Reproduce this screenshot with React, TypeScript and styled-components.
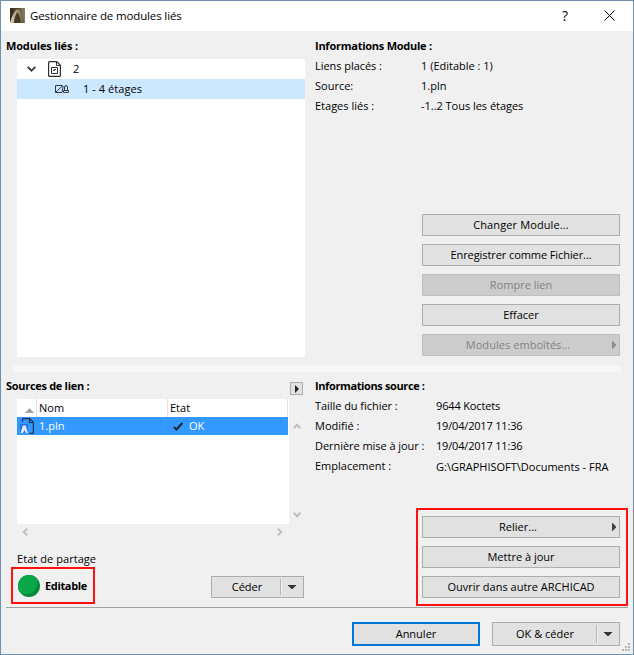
import React from 'react';
import styled, { createGlobalStyle, css } from 'styled-components';

const Global = createGlobalStyle`
  *{box-sizing:border-box}
  body{margin:0;background:#f0f0f0;overflow:hidden}
  svg{display:block;flex:none}
`;

const Window = styled.div`
  width:634px;height:655px;border:1px solid #6f8fab;background:#f0f0f0;
  display:flex;flex-direction:column;position:relative;
  font:11px/20px "Open Sans","Noto Sans",sans-serif;color:#000;
`;
const T = styled.span<{ $ls?: number; $b?: boolean; $dy?: number }>`
  white-space:pre;letter-spacing:${p => p.$ls ?? 0}px;font-weight:${p => (p.$b ? 700 : 400)};
  padding-top:${p => p.$dy ?? 0}px;
`;
const TitleBar = styled.header`
  height:30px;background:#fff;display:flex;align-items:center;padding:0 18px 1px 9px;font-size:11.5px;
`;
const Title = styled.div`flex:1;margin-left:5px;`;
const HelpMark = styled.div`width:8px;margin-right:34px;font-size:14px;font-weight:500;`;

const Upper = styled.section`height:335px;display:flex;padding-top:5px;`;
const Lower = styled.section`height:235px;display:flex;padding-top:4px;`;
const Left = styled.div`width:314px;padding-left:5px;`;
const Right = styled.div`flex:1;display:flex;flex-direction:column;`;
const Heading = styled.h2`
  margin:0;height:20px;font-size:11px;line-height:20px;font-weight:700;display:flex;justify-content:space-between;
`;
const Tree = styled.div`margin:3px 0 0 11px;width:288px;height:298px;background:#fff;`;
const TreeRow = styled.div<{ $sel?: boolean; $pad: number; $gap: number }>`
  height:20px;display:flex;align-items:center;padding-left:${p => p.$pad}px;gap:${p => p.$gap}px;
  background:${p => (p.$sel ? '#cce8ff' : '#fff')};
`;
const InfoRow = styled.div<{ $w: number }>`
  display:grid;grid-template-columns:${p => p.$w}px 1fr;height:20px;
`;
const Buttons = styled.div`
  margin:98px 0 0 107px;display:flex;flex-direction:column;gap:8px;width:198px;
`;
const Button = styled.button<{ $off?: boolean; $w?: number; $h?: number; $primary?: boolean }>`
  width:${p => p.$w ?? 198}px;height:${p => p.$h ?? 22}px;padding:0;
  border:1px solid #adadad;background:#e1e1e1;color:#000;font:inherit;line-height:18px;
  display:flex;align-items:center;
  ${p => p.$off && css`background:#ccc;border-color:#bfbfbf;color:#838383;`}
  ${p => p.$primary && css`border:2px solid #0078d7;`}
`;
const Label = styled.span<{ $pl?: number }>`flex:1;text-align:center;padding-left:${p => p.$pl ?? 0}px;`;
const Arrow = styled.svg`margin-right:3px;`;
const Drop = styled.span<{ $h: number }>`
  width:23px;height:${p => p.$h}px;border-left:1px solid #b4b4b4;box-shadow:inset 1px 0 #f4f4f4;
  display:flex;align-items:center;justify-content:center;
`;
const Band = styled.div`height:6px;margin:0 12px;background:#f7f7f7;`;
const MiniButton = styled.button`
  width:13px;height:13px;padding:0 0 0 1px;border:1px solid #adadad;background:#e1e1e1;margin:6px 12px 0 0;
  display:flex;align-items:center;justify-content:center;
`;
const ListArea = styled.div`display:grid;grid-template-columns:272px 16px;margin:3px 0 0 11px;`;
const List = styled.div`height:125px;background:#fff;line-height:18px;`;
const Columns = styled.div<{ $sel?: boolean }>`
  width:271px;height:18px;display:grid;grid-template-columns:20px 131px 120px;
  ${p => p.$sel && css`background:#3399ff;color:#fff;`}
`;
const Cell = styled.div<{ $line?: boolean; $pad?: number; $gap?: number }>`
  display:flex;align-items:center;padding-left:${p => p.$pad ?? 0}px;gap:${p => p.$gap ?? 0}px;
  border-right:${p => (p.$line ? '1px solid #e3e3e3' : '0')};
`;
const VScroll = styled.div`
  display:flex;flex-direction:column;justify-content:space-between;padding:24px 0 6px 4px;
`;
const HScroll = styled.div`
  display:flex;justify-content:space-between;padding:4px 6px 0 5px;height:25px;width:272px;
`;
const Share = styled.div`margin-left:11px;`;
const ShareRow = styled.div`display:flex;align-items:flex-start;margin:-2px 0 0 5px;gap:116px;`;
const Flag = styled.div`
  width:84px;height:37px;border:2px solid #ff1010;display:flex;align-items:center;padding-left:5px;gap:5px;
`;
const SplitSlot = styled.div`padding-top:9px;`;
const Highlight = styled.div`
  width:212px;height:98px;border:2px solid #ff1010;margin:32px 0 0 101px;padding:6px 0 0 4px;
  display:flex;flex-direction:column;gap:8px;
`;
const Footer = styled.footer`
  margin:0 5px;border-top:1px solid #a0a0a0;height:47px;display:flex;justify-content:flex-end;gap:12px;padding:14px 8px 0 0;
`;
const Grip = styled.svg`position:absolute;right:2px;bottom:2px;`;

const AppIcon = () => (
  <svg width="15" height="15" viewBox="0 0 15 15">
    <defs>
      <linearGradient id="sky" x2="1">
        <stop stopColor="#33291b" /><stop offset=".55" stopColor="#5b4d37" /><stop offset="1" stopColor="#8d8068" />
      </linearGradient>
      <linearGradient id="arch" x2="1">
        <stop stopColor="#dcd2ba" /><stop offset=".5" stopColor="#a89976" /><stop offset="1" stopColor="#5f5139" />
      </linearGradient>
    </defs>
    <rect width="15" height="15" fill="url(#sky)" />
    <path d="M0 15Q2 7 6 2Q8 .5 10 3Q13 8 14.5 15H11.5Q10 8 7.5 4Q4.5 8 4 15Z" fill="url(#arch)" />
    <path d="M7.3 4.5Q5 8 4.3 15H11Q10 8 7.3 4.5" fill="#453a29" />
  </svg>
);
const Chevron = ({ d, w = 8, h = 6, c = '#bfbfbf' }: { d: string; w?: number; h?: number; c?: string }) => (
  <svg width={w} height={h} viewBox={`0 0 ${w} ${h}`}><path d={d} fill="none" stroke={c} strokeWidth="2" /></svg>
);
const ModuleFile = () => (
  <svg width="13" height="16" viewBox="0 0 13 16" fill="none" stroke="#2b2f33">
    <path d="M1.5 .6H8.7L12.4 4.3V14.5Q12.4 15.4 11.5 15.4H1.5Q.6 15.4 .6 14.5V1.5Q.6 .6 1.5 .6Z" strokeWidth="1.2" />
    <path d="M8.5 .8V4.5H12.2" />
    <path d="M3.5 6.5H9.5V12.5H3.500ZM5 9.500H6.500V8.500H8" />
  </svg>
);
const StoreyIcon = () => (
  <svg width="14" height="8" viewBox="0 0 14 8" fill="none" stroke="#2f3a44">
    <path d="M7.5 .5H.5V7.5H7L8.2 1M.8 7.2L7.5 .8" />
    <path d="M9.5 5.5V2Q9.5 .6 11 .6T12.5 2V5.5M8.5 7.4V5.5H13.5V7.4Z" />
  </svg>
);
const LinkFile = () => (
  <svg width="16" height="16" viewBox="0 0 16 16">
    <path d="M2.5 4V1.5Q2.5 .6 3.5 .6H9.700L13.400 4.300V14.500Q13.400 15.400 12.500 15.400H9.500M9.500 .8V4.500H13.200" fill="none" stroke="#16324f" strokeWidth="1.2" />
    <rect x="0" y="6" width="8" height="9" fill="#2a72d8" />
    <path d="M.5 15L2.800 7.500H5.800L7.800 15H5.800L4.600 12L3 15Z" fill="#dcebff" />
  </svg>
);
const Side = ({ off }: { off?: boolean }) => (
  <Arrow width="4" height="8"><path d="M0 0H.6L4 3.500V4.500L.6 8H0Z" fill={off ? '#8f8f8f' : '#404040'} /></Arrow>
);
const Down = () => <svg width="8" height="4"><path d="M0 0H8V.6L4.5 4H3.5L0 .6Z" fill="#333" /></svg>;

export default function App() {
  return (
    <Window>
      <Global />
      <TitleBar>
        <AppIcon />
        <Title><T $ls={-0.14}>Gestionnaire de modules liés</T></Title>
        <HelpMark>?</HelpMark>
        <svg width="11" height="11"><path d="M.5 .5L10.5 10.5M10.5 .5L.5 10.5" stroke="#000" fill="none" /></svg>
      </TitleBar>

      <Upper>
        <Left>
          <Heading><T $b $ls={-0.17}>Modules liés :</T></Heading>
          <Tree>
            <TreeRow $pad={10} $gap={12}>
              <Chevron d="M.7 .9L4.5 4.6L8.3 .9" w={9} c="#404040" />
              <ModuleFile />
              <T>2</T>
            </TreeRow>
            <TreeRow $sel $pad={38} $gap={14}>
              <StoreyIcon />
              <T $ls={0.06}>1 - 4 étages</T>
            </TreeRow>
          </Tree>
        </Left>
        <Right>
          <Heading><T $b $ls={-0.25}>Informations Module :</T></Heading>
          <InfoRow $w={106}><T $ls={-0.05}>Liens placés :</T><T>1 (Editable : 1)</T></InfoRow>
          <InfoRow $w={106}><T>Source:</T><T>1.pln</T></InfoRow>
          <InfoRow $w={106}><T>Etages liés :</T><T $ls={-0.03}>-1..2 Tous les étages</T></InfoRow>
          <Buttons>
            <Button><Label><T $ls={0.12}>Changer Module...</T></Label></Button>
            <Button><Label><T $ls={-0.08}>Enregistrer comme Fichier...</T></Label></Button>
            <Button $off><Label><T>Rompre lien</T></Label></Button>
            <Button><Label><T>Effacer</T></Label></Button>
            <Button $off><Label $pl={1}><T $ls={0.05}>Modules emboîtés...</T></Label><Side off /></Button>
          </Buttons>
        </Right>
      </Upper>
      <Band />
      <Lower>
        <Left>
          <Heading>
            <T $b $ls={-0.3}>Sources de lien :</T>
            <MiniButton><svg width="4" height="8"><path d="M0 0L4 4L0 8Z" fill="#222" /></svg></MiniButton>
          </Heading>
          <ListArea>
            <List>
              <Columns>
                <Cell $line $pad={8}><svg width="9" height="12"><path d="M4.5 6L9 11H0Z" fill="#a0a0a0" /></svg></Cell>
                <Cell $line $pad={2}><T>Nom</T></Cell>
                <Cell $line $pad={2}><T>Etat</T></Cell>
              </Columns>
              <Columns $sel>
                <Cell $pad={3}><LinkFile /></Cell>
                <Cell $pad={2}><T>1.pln</T></Cell>
                <Cell $pad={5} $gap={6}>
                  <svg width="10" height="9"><path d="M.8 5L3.5 7.5L9.3 1" fill="none" stroke="#1c2733" strokeWidth="2" /></svg>
                  <T>OK</T>
                </Cell>
              </Columns>
            </List>
            <VScroll>
              <Chevron d="M.7 5.2L4 1.7L7.3 5.2" />
              <Chevron d="M.7 .8L4 4.3L7.3 .8" />
            </VScroll>
          </ListArea>
          <Share>
            <HScroll>
              <Chevron d="M5.2 .7L1.7 4L5.2 7.3" w={6} h={8} />
              <Chevron d="M.8 .7L4.3 4L.8 7.3" w={6} h={8} />
            </HScroll>
            <T $ls={0.06}>Etat de partage</T>
          </Share>
          <ShareRow>
            <Flag>
              <svg width="22" height="22" viewBox="0 0 22 22">
                <circle cx="11" cy="11" r="11" fill="#07883a" />
                <path d="M11 0A11 11 0 0 0 3.2 18.8Q12 20 16 16T18.800 3.200A11 11 0 0 0 11 0Z" fill="#0aa84a" />
              </svg>
              <T $b $ls={-0.35}>Editable</T>
            </Flag>
            <SplitSlot>
              <Button $w={93}><Label $pl={2}><T>Céder</T></Label><Drop $h={16}><Down /></Drop></Button>
            </SplitSlot>
          </ShareRow>
        </Left>
        <Right>
          <Heading><T $b $ls={-0.38}>Informations source :</T></Heading>
          <InfoRow $w={121}><T $ls={-0.05}>Taille du fichier :</T><T $ls={-0.15}>9644 Koctets</T></InfoRow>
          <InfoRow $w={121}><T>Modifié :</T><T $ls={-0.18}>19/04/2017 11:36</T></InfoRow>
          <InfoRow $w={121}><T $ls={-0.05}>Dernière mise à jour :</T><T $ls={-0.18}>19/04/2017 11:36</T></InfoRow>
          <InfoRow $w={121}><T>Emplacement :</T><T $dy={1}>G:\GRAPHISOFT\Documents - FRA</T></InfoRow>
          <Highlight>
            <Button><Label $pl={1}><T>Relier...</T></Label><Side /></Button>
            <Button><Label><T>Mettre à jour</T></Label></Button>
            <Button><Label><T>Ouvrir dans autre ARCHICAD</T></Label></Button>
          </Highlight>
        </Right>
      </Lower>
      <Footer>
        <Button $w={128} $h={24} $primary><Label><T>Annuler</T></Label></Button>
        <Button $w={128} $h={24}><Label $pl={1}><T>OK &amp; céder</T></Label><Drop $h={18}><Down /></Drop></Button>
      </Footer>
      <Grip width="9" height="9" fill="#b8b8b8">
        <path d="M6 0h2v2h-2zM3 3h2v2h-2zM6 3h2v2h-2zM0 6h2v2h-2zM3 6h2v2h-2zM6 6h2v2h-2z" />
      </Grip>
    </Window>
  );
}
